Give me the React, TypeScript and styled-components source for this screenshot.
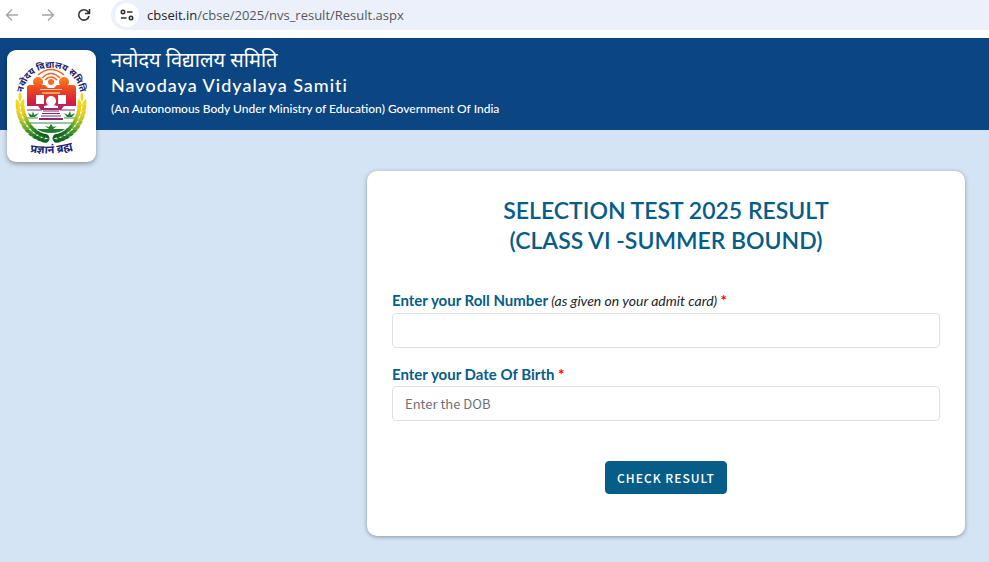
import React from "react";
import styled, { createGlobalStyle } from "styled-components";

const GlobalStyle = createGlobalStyle`
  *, *::before, *::after { box-sizing: border-box; }
  html { height: 100%; }
  body {
    margin: 0;
    min-height: 100%;
    background: #d5e4f4;
    font-family: Lato, "Noto Sans", sans-serif;
    color: #212529;
  }
`;

const Toolbar = styled.nav`
  display: flex;
  align-items: center;
  height: 38px;
  padding-bottom: 9px;
  background: #fff;
`;

const NavButton = styled.button<{ $color: string }>`
  display: grid;
  place-items: center;
  width: 36px;
  height: 30px;
  padding: 0;
  border: 0;
  background: none;
  color: ${(p) => p.$color};
  &:first-child { width: 24px; margin-right: 6px; }
`;

const AddressBar = styled.div`
  display: flex;
  align-items: center;
  flex: 1;
  height: 30px;
  margin-left: 9px;
  padding-left: 4px;
  gap: 8px;
  border-radius: 15px 0 0 15px;
  background: #ecf0fa;
`;

const SiteButton = styled.button`
  display: grid;
  place-items: center;
  width: 24px;
  height: 24px;
  padding: 0;
  border: 0;
  border-radius: 50%;
  background: #fff;
  color: #303236;
`;

const Address = styled.a`
  font: 13px/20px "Open Sans", "Noto Sans", sans-serif;
  color: #55585d;
  text-decoration: none;
`;

const Host = styled.span`
  color: #202226;
`;

const Banner = styled.header`
  display: flex;
  align-items: flex-start;
  gap: 15px;
  height: 92px;
  padding: 12px 7px 0;
  background: #0b4683;
  color: #fff;
`;

const LogoCard = styled.a`
  flex: none;
  width: 89px;
  height: 112px;
  border-radius: 9px;
  background: #fff;
  box-shadow: 0 2px 5px rgba(0, 0, 0, 0.35);
`;

const BannerText = styled.div`
  display: flex;
  flex-direction: column;
`;

const HindiName = styled.div`
  font: 400 20px/24px "Noto Sans Devanagari", "Noto Sans", sans-serif;
`;

const EnglishName = styled.div`
  font-size: 18px;
  line-height: 22px;
  font-weight: 500;
  letter-spacing: 1px;
`;

const Subtitle = styled.div`
  font-size: 12px;
  line-height: 26px;
  font-weight: 500;
`;

const Main = styled.main`
  display: flex;
  justify-content: flex-end;
  padding: 41px 24px 26px;
`;

const Card = styled.form`
  display: flex;
  flex-direction: column;
  flex: 0 1 598px;
  padding: 24px 25px 42px;
  border-radius: 10px;
  background: #fff;
  box-shadow: 0 1px 4px rgba(20, 30, 60, 0.4);
`;

const Title = styled.h1`
  margin: 0 0 35px;
  font-size: 23px;
  line-height: 30px;
  font-weight: 600;
  text-align: center;
  color: #065d88;
`;

const Field = styled.div`
  display: flex;
  flex-direction: column;
  margin-bottom: 16px;
`;

const Label = styled.label`
  font-size: 15px;
  line-height: 20px;
  margin-bottom: 2px;
  font-weight: 700;
  color: #065d88;
`;

const Hint = styled.em`
  font-size: 14px;
  font-weight: 400;
  color: #212529;
`;

const Required = styled.span`
  color: #f00;
`;

const TextInput = styled.input`
  width: 100%;
  height: 35px;
  padding: 0 12px;
  border: 1px solid #dee2e6;
  border-radius: 4px;
  background: #fff;
  color: #212529;
  font: 13px/20px "Noto Sans CJK SC", "Noto Sans", sans-serif;
  &::placeholder { color: #6c7075; opacity: 1; }
`;

const Submit = styled.button`
  align-self: center;
  height: 33px;
  margin-top: 24px;
  padding: 0 11px;
  border: 1px solid #065d88;
  border-radius: 4px;
  background: #065d88;
  color: #fff;
  font: 500 12px/20px "Noto Sans CJK SC", "Noto Sans", sans-serif;
  letter-spacing: 1px;
`;

const EmblemSvg = styled.svg`
  display: block;
  width: 100%;
  height: 100%;
  font-family: "Noto Sans Devanagari", "Noto Sans", sans-serif;
  font-weight: 700;
`;

const leafColors = ["#f6d51c", "#f0d01a", "#e2cc1c", "#c3c922", "#93bb24", "#6cab25", "#429627", "#2b8427", "#1c7224", "#166821", "#12601f"];

const leaves = leafColors.map((color, i) => {
  const deg = i * 8;
  const t = (deg * Math.PI) / 180;
  return { x: 31 * Math.cos(t), y: 53 + 36 * Math.sin(t), deg, color };
});

function Wreath({ side }: { side: 1 | -1 }) {
  return (
    <g transform={`translate(44 0) scale(${side} 1)`}>
      {leaves.map((l) => (
        <g key={l.color} transform={`translate(${l.x} ${l.y}) rotate(${l.deg})`} fill={l.color}>
          <path d="M0 4 Q-6 3 -4 -4 Q0 -2 0 4Z" />
          <path d="M0 4 Q6 3 4 -4 Q0 -2 0 4Z" />
        </g>
      ))}
      <path d="M31 52 Q28 47 31 42 Q34 47 31 52Z" fill="#f6d51c" />
    </g>
  );
}

function Emblem() {
  return (
    <EmblemSvg viewBox="0 0 89 112" role="img" aria-label="नवोदय विद्यालय समिति">
      <defs>
        <path id="top-arc" d="M17 56 A29 29 0 1 1 72 56" />
        <path id="bottom-arc" d="M19 101 Q44 107 70 98" />
        <linearGradient id="warm" x1="0" y1="26" x2="0" y2="62" gradientUnits="userSpaceOnUse">
          <stop offset="0" stopColor="#f78a1d" />
          <stop offset=".35" stopColor="#ee4a22" />
          <stop offset=".7" stopColor="#d7203e" />
          <stop offset="1" stopColor="#8e2a78" />
        </linearGradient>
      </defs>
      <text fontSize="9" fill="#20206e">
        <textPath href="#top-arc" startOffset="50%" textAnchor="middle">नवोदय विद्यालय समिति</textPath>
      </text>
      <g fill="none" stroke="#ef6228" strokeWidth="1.5">
        <path d="M31 25 Q44 14 57 25" />
        <path d="M35 28 Q44 19 53 28" />
        <path d="M38 30 Q44 24 50 30" />
      </g>
      <circle cx="44" cy="32" r="3" fill="#f36c21" />
      <g fill="url(#warm)">
        <circle cx="31" cy="32" r="5" />
        <circle cx="57" cy="32" r="5" />
        <path d="M20 37 Q20 35 23 35 H38 L41 38 H47 L50 35 H66 Q69 35 69 38 V56 H57 L54 60 H34 L31 56 H20Z" />
      </g>
      <g fill="#fff">
        <path d="M29 45 H37 V54 H29Z M51 45 H59 V54 H51Z" />
        <circle cx="44" cy="51" r="5" />
        <path d="M37 56 Q44 54 51 56 V58 H37Z" />
        <path d="M33 39 H55 V40 H33Z" opacity=".7" />
      </g>
      <path d="M35 42 H53 V44 H35Z" fill="#f5a04b" />
      <g stroke="#812b74" strokeWidth="1">
        <path d="M20 60 H35 M53 60 H68 M36 61 H52 M35 63.5 H53 M34 66 H54" />
        <path d="M32 69 H56" strokeWidth="2" />
      </g>
      <g stroke="#3d8a43" strokeWidth="1">
        <path d="M20 68 H31 M57 68 H68 M23 73 H65" />
      </g>
      <g fill="#247c2d">
        <path d="M21 63 L25 65 L26 61 L27 65 L32 63 L28 67 H23Z" />
        <path d="M57 63 L61 65 L63 61 L64 65 L68 63 L65 67 H60Z" />
        <path d="M38 76 L42 77 L44 74 L46 77 L50 76 L46 79 H42Z" />
        <path d="M30 79 H58 Q53 83 44 83 Q35 83 30 79Z" />
      </g>
      <Wreath side={1} />
      <Wreath side={-1} />
      <text fontSize="11" fill="#20206e">
        <textPath href="#bottom-arc" startOffset="50%" textAnchor="middle">प्रज्ञानं ब्रह्म</textPath>
      </text>
    </EmblemSvg>
  );
}

function ArrowIcon({ back = false }: { back?: boolean }) {
  return (
    <svg width="14" height="14" viewBox="0 0 14 14" fill="none" stroke="currentColor" strokeWidth="1.4">
      <path d={back ? "M13 7H2M7 1.5L1.5 7L7 12.5" : "M1 7H12M7 1.5L12.5 7L7 12.5"} />
    </svg>
  );
}

function ReloadIcon() {
  return (
    <svg width="14" height="14" viewBox="0 0 14 14" fill="none" stroke="currentColor" strokeWidth="1.6">
      <path d="M12 8A5.2 5.2 0 1 1 11.2 4L12.5 5.3M12.5 1V5.5H8" />
    </svg>
  );
}

function SiteIcon() {
  return (
    <svg width="14" height="12" viewBox="0 0 14 12" fill="none" stroke="currentColor" strokeWidth="1.6">
      <circle cx="3" cy="3" r="1.7" />
      <path d="M7 3H12.5M1 9H6.5" />
      <circle cx="11" cy="9" r="1.7" />
    </svg>
  );
}

export default function App() {
  return (
    <>
      <GlobalStyle />
      <Toolbar aria-label="Browser">
        <NavButton type="button" aria-label="Back" $color="#a5a6a8"><ArrowIcon back /></NavButton>
        <NavButton type="button" aria-label="Forward" $color="#a5a6a8"><ArrowIcon /></NavButton>
        <NavButton type="button" aria-label="Reload" $color="#303236"><ReloadIcon /></NavButton>
        <AddressBar>
          <SiteButton type="button" aria-label="Site information"><SiteIcon /></SiteButton>
          <Address href="#"><Host>cbseit.in</Host>/cbse/2025/nvs_result/Result.aspx</Address>
        </AddressBar>
      </Toolbar>
      <Banner>
        <LogoCard href="#"><Emblem /></LogoCard>
        <BannerText>
          <HindiName lang="hi">नवोदय विद्यालय समिति</HindiName>
          <EnglishName>Navodaya Vidyalaya Samiti</EnglishName>
          <Subtitle>(An Autonomous Body Under Ministry of Education) Government Of India</Subtitle>
        </BannerText>
      </Banner>
      <Main>
        <Card onSubmit={(e) => e.preventDefault()}>
          <Title>SELECTION TEST 2025 RESULT<br />(CLASS VI -SUMMER BOUND)</Title>
          <Field>
            <Label htmlFor="roll">Enter your Roll Number <Hint>(as given on your admit card) </Hint><Required>*</Required></Label>
            <TextInput id="roll" type="text" />
          </Field>
          <Field>
            <Label htmlFor="dob">Enter your Date Of Birth <Required>*</Required></Label>
            <TextInput id="dob" type="text" placeholder="Enter the DOB" />
          </Field>
          <Submit type="submit">CHECK RESULT</Submit>
        </Card>
      </Main>
    </>
  );
}
